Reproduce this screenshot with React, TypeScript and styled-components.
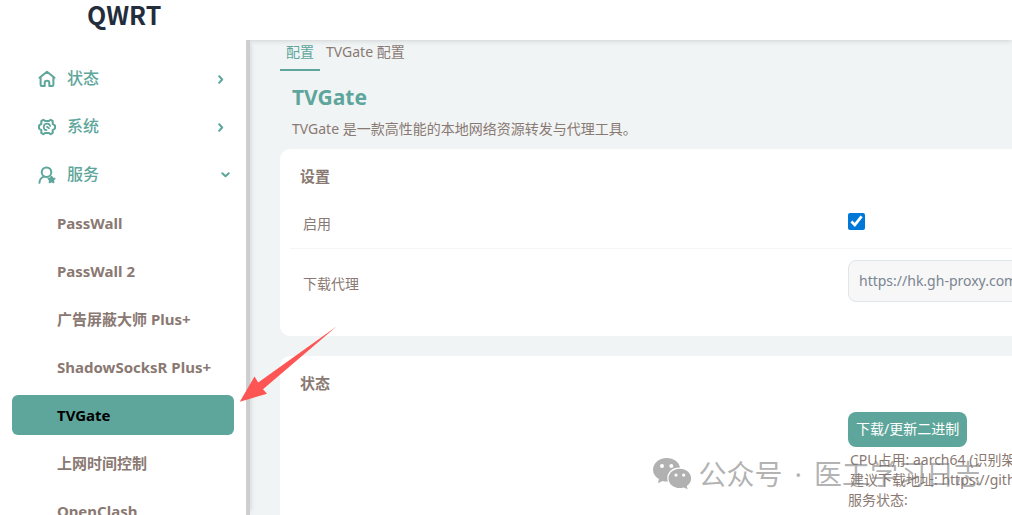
import React from "react";
import styled, { createGlobalStyle, css } from "styled-components";

const teal = "#5ea69b";
const brown = "#8a7972";

const GlobalStyle = createGlobalStyle`
  *, *::before, *::after { box-sizing: border-box; }
  body {
    margin: 0;
    background: #f0f4f5;
    color: ${brown};
    font-family: "Noto Sans", "Noto Sans CJK SC", sans-serif;
    font-size: 14px;
    line-height: 20px;
  }
  h1, h2, p, ul { margin: 0; padding: 0; }
  ul { list-style: none; }
`;

const Page = styled.div`
  position: relative;
  display: flex;
  flex-direction: column;
  height: 100vh;
  overflow: hidden;
`;

const Header = styled.header`
  z-index: 1;
  flex: none;
  height: 40px;
  padding: 0 87px;
  background: #fff;
  box-shadow: 0 0 6px rgba(0, 0, 0, 0.18);
`;

const Brand = styled.a`
  display: block;
  color: #232d3b;
  font-family: "Noto Sans CJK SC", sans-serif;
  font-size: 25px;
  font-weight: 700;
  line-height: 28px;
  text-decoration: none;
`;

const Body = styled.div`
  display: flex;
  flex: 1;
  min-height: 0;
`;

const Sidebar = styled.nav`
  position: relative;
  z-index: 2;
  flex: none;
  width: 250px;
  padding: 19px 12px 0;
  overflow: hidden;
  background: #fff;
  border-right: 4px solid #cecece;
  box-shadow: 5px 0 5px -4px rgba(0, 0, 0, 0.12);
`;

const Menu = styled.ul`
  display: flex;
  flex-direction: column;
  gap: 8px;
`;

const GroupButton = styled.button<{ $open?: boolean }>`
  display: flex;
  align-items: center;
  width: 100%;
  height: 40px;
  padding: 0 ${(p) => (p.$open ? 4 : 10)}px 0 26px;
  border: 0;
  background: none;
  color: ${teal};
  font: inherit;
  font-size: 16px;
  font-weight: 500;
  line-height: 24px;
  text-align: left;
`;

const GroupLabel = styled.span`
  flex: 1;
  padding: 0 0 2px 11px;
`;

const ItemLink = styled.a<{ $active?: boolean }>`
  display: block;
  height: 40px;
  padding-left: 45px;
  border-radius: 6px;
  color: ${brown};
  font-size: 15px;
  font-weight: 700;
  line-height: 40px;
  text-decoration: none;
  white-space: nowrap;
  ${(p) =>
    p.$active &&
    css`
      background: ${teal};
      color: #000;
    `}
`;

const Main = styled.main`
  flex: 1;
  min-width: 0;
  overflow: hidden;
  padding-left: 30px;
`;

const Content = styled.div`
  margin-right: -32px;
`;

const Tabs = styled.div`
  display: flex;
`;

const Tab = styled.a<{ $active?: boolean }>`
  height: 31px;
  padding: 2px 6px 0;
  border-bottom: 2px solid ${(p) => (p.$active ? teal : "transparent")};
  color: ${(p) => (p.$active ? teal : brown)};
  text-decoration: none;
`;

const Title = styled.h1`
  padding: 12px 12px 0;
  color: ${teal};
  font-size: 21px;
  line-height: 28px;
`;

const Description = styled.p`
  padding: 8px 12px 10px;
`;

const Card = styled.section`
  margin-bottom: 20px;
  padding: 17px 10px 22px;
  border-radius: 10px;
  background: #fff;
`;

const CardTitle = styled.h2`
  padding: 0 10px;
  font-size: 15px;
  line-height: 20px;
`;

const Row = styled.div<{ $divided?: boolean }>`
  display: grid;
  grid-template-columns: minmax(0, 3fr) minmax(0, 1fr);
  align-items: center;
  height: ${(p) => (p.$divided ? 63 : 65)}px;
  padding-top: ${(p) => (p.$divided ? 8 : 0)}px;
  border-bottom: 1px solid ${(p) => (p.$divided ? "#f4f5f5" : "transparent")};
`;

const RowLabel = styled.label`
  padding: 6px 0 0 13px;
`;

const Checkbox = styled.input`
  display: block;
  width: 17px;
  height: 17px;
  margin: 0;
  accent-color: #0078d7;
`;

const TextInput = styled.input`
  width: 100%;
  height: 42px;
  padding: 0 10px 2px;
  border: 1px solid #dfe6e9;
  border-radius: 8px;
  background: #f7f7f7;
  color: #7a8591;
  font: inherit;
`;

const Status = styled.div`
  display: grid;
  grid-template-columns: minmax(0, 3fr) minmax(0, 1fr);
  padding-top: 19px;
`;

const StatusBody = styled.div`
  grid-column: 2;
  white-space: nowrap;
`;

const Details = styled.div`
  padding-left: 2px;
`;

const PrimaryButton = styled.button`
  display: block;
  height: 35px;
  margin-bottom: 3px;
  padding: 0 8px 2px;
  border: 0;
  border-radius: 8px;
  background: ${teal};
  color: #fff;
  font: inherit;
`;

const Watermark = styled.div`
  position: absolute;
  z-index: 3;
  right: 30px;
  bottom: 21px;
  display: flex;
  align-items: center;
  gap: 12px;
  color: rgba(120, 120, 120, 0.58);
  font-size: 28px;
  line-height: 40px;
  white-space: nowrap;
  pointer-events: none;
`;

const Account = styled.span`
  display: flex;
  align-items: center;
  gap: 6px;
`;

const Arrow = styled.svg`
  position: absolute;
  z-index: 3;
  left: 239px;
  top: 325px;
  pointer-events: none;
`;

const stroke = {
  fill: "none",
  stroke: "currentColor",
  strokeWidth: 2,
  strokeLinecap: "round" as const,
  strokeLinejoin: "round" as const,
};

const HomeIcon = () => (
  <svg width="18" height="18" viewBox="0 0 18 18" {...stroke}>
    <path d="M1.500 7.800 9 1.700l7.500 6.100M2.600 7.400v7.400c0 .8.5 1.300 1.300 1.300h2.800v-3.300c0-2.900 4.600-2.900 4.600 0v3.300h2.800c.8 0 1.300-.5 1.300-1.300V7.400" />
  </svg>
);

const GearIcon = () => (
  <svg width="18" height="18" viewBox="0 0 18 18" {...stroke}>
    <path d="M5.300 1.700 7 2.900h4l1.700-1.200 2 1.400v2.800L17 7.500v3l-2.300 1.600v2.800l-2 1.400-1.700-1.200H7l-1.700 1.200-2-1.400v-2.800L1 10.500v-3l2.300-1.600V3.100Z" />
    <path strokeWidth="1.700" d="M12.200 8A3.300 3.300 0 1 0 8.500 12.200M9 8.800l2 1.500" />
  </svg>
);

const UserIcon = () => (
  <svg width="18" height="18" viewBox="0 0 18 18" {...stroke}>
    <circle cx="8.500" cy="6.200" r="4.800" />
    <path d="M1.400 16.800c.3-3.400 1.900-5.500 4.600-6.200" />
    <path fill="currentColor" strokeWidth="1.500" d="m13.500 10.500 1.100 1.700 2.200.4-1.500 1.700.3 2.200-2.100-.9-2.100.9.3-2.200-1.500-1.700 2.200-.4Z" />
  </svg>
);

const Chevron = ({ down }: { down?: boolean }) => (
  <svg width={down ? 9 : 6} height={down ? 6 : 9} viewBox={down ? "0 0 9 6" : "0 0 6 9"} {...stroke}>
    <path d={down ? "m1.300 1.200 3.200 3 3.200-3" : "m1.200 1.300 3 3.200-3 3.200"} />
  </svg>
);

const WeChatIcon = () => (
  <svg width="39" height="32" viewBox="0 0 39 32" fill="currentColor" fillRule="evenodd">
    <path d="M13.500 0C21 0 26.200 4.300 27 9.600 19.500 9.300 14.300 14.200 14.300 20c0 1.300.2 2.400.6 3.500-2 .1-3.700-.1-5.400-.6L5 25.200l.9-4.100C2.200 18.800 0 15.600 0 11.800 0 5.200 6 0 13.500 0ZM9 6a2 2 0 1 0 0 4 2 2 0 0 0 0-4Zm9.300 0a2 2 0 1 0 0 4 2 2 0 0 0 0-4Z" />
    <path d="M26.800 10.700c6.400 0 11.300 4.300 11.300 9.800 0 3-1.700 5.700-4.300 7.500l.8 3.300-3.900-1.800c-1.200.4-2.600.6-3.900.6-6.400 0-11.300-4.200-11.300-9.600s4.900-9.800 11.300-9.800ZM23 15.500a1.600 1.600 0 1 0 0 3.200 1.600 1.600 0 0 0 0-3.200Zm7.700 0a1.600 1.600 0 1 0 0 3.200 1.600 1.600 0 0 0 0-3.200Z" />
  </svg>
);

const groups = [
  { label: "状态", icon: <HomeIcon /> },
  { label: "系统", icon: <GearIcon /> },
  { label: "服务", icon: <UserIcon />, open: true },
];

const services = ["PassWall", "PassWall 2", "广告屏蔽大师 Plus+", "ShadowSocksR Plus+", "TVGate", "上网时间控制", "OpenClash"];

export default function App() {
  return (
    <Page>
      <GlobalStyle />
      <Header>
        <Brand href="#">QWRT</Brand>
      </Header>
      <Body>
        <Sidebar>
          <Menu>
            {groups.map((g) => (
              <li key={g.label}>
                <GroupButton type="button" $open={g.open} aria-expanded={!!g.open}>
                  {g.icon}
                  <GroupLabel>{g.label}</GroupLabel>
                  <Chevron down={g.open} />
                </GroupButton>
              </li>
            ))}
            {services.map((name) => (
              <li key={name}>
                <ItemLink href="#" $active={name === "TVGate"}>
                  {name}
                </ItemLink>
              </li>
            ))}
          </Menu>
        </Sidebar>
        <Main>
          <Content>
            <Tabs>
              <Tab href="#" $active>配置</Tab>
              <Tab href="#">TVGate 配置</Tab>
            </Tabs>
            <Title>TVGate</Title>
            <Description>TVGate 是一款高性能的本地网络资源转发与代理工具。</Description>
            <Card>
              <CardTitle>设置</CardTitle>
              <Row $divided>
                <RowLabel htmlFor="enabled">启用</RowLabel>
                <Checkbox id="enabled" type="checkbox" defaultChecked />
              </Row>
              <Row>
                <RowLabel htmlFor="proxy">下载代理</RowLabel>
                <TextInput id="proxy" type="text" defaultValue="https://hk.gh-proxy.com/" />
              </Row>
            </Card>
            <Card>
              <CardTitle>状态</CardTitle>
              <Status>
                <StatusBody>
                  <PrimaryButton type="button">下载/更新二进制</PrimaryButton>
                  <Details>
                    <p>CPU占用: aarch64 (识别架构)</p>
                    <p>建议下载地址: https://github.com</p>
                  </Details>
                  <p>服务状态:</p>
                </StatusBody>
              </Status>
            </Card>
          </Content>
        </Main>
      </Body>
      <Arrow width="98" height="78" viewBox="0 0 98 78" fill="#fd5553">
        <path d="M97.500 1.500 24 64.200l4 4.500L.8 76.700 15.500 51.500l3.700 6Z" />
      </Arrow>
      <Watermark>
        <Account>
          <WeChatIcon />
          公众号
        </Account>
        <span>·</span>
        <span>医工学习日志</span>
      </Watermark>
    </Page>
  );
}
